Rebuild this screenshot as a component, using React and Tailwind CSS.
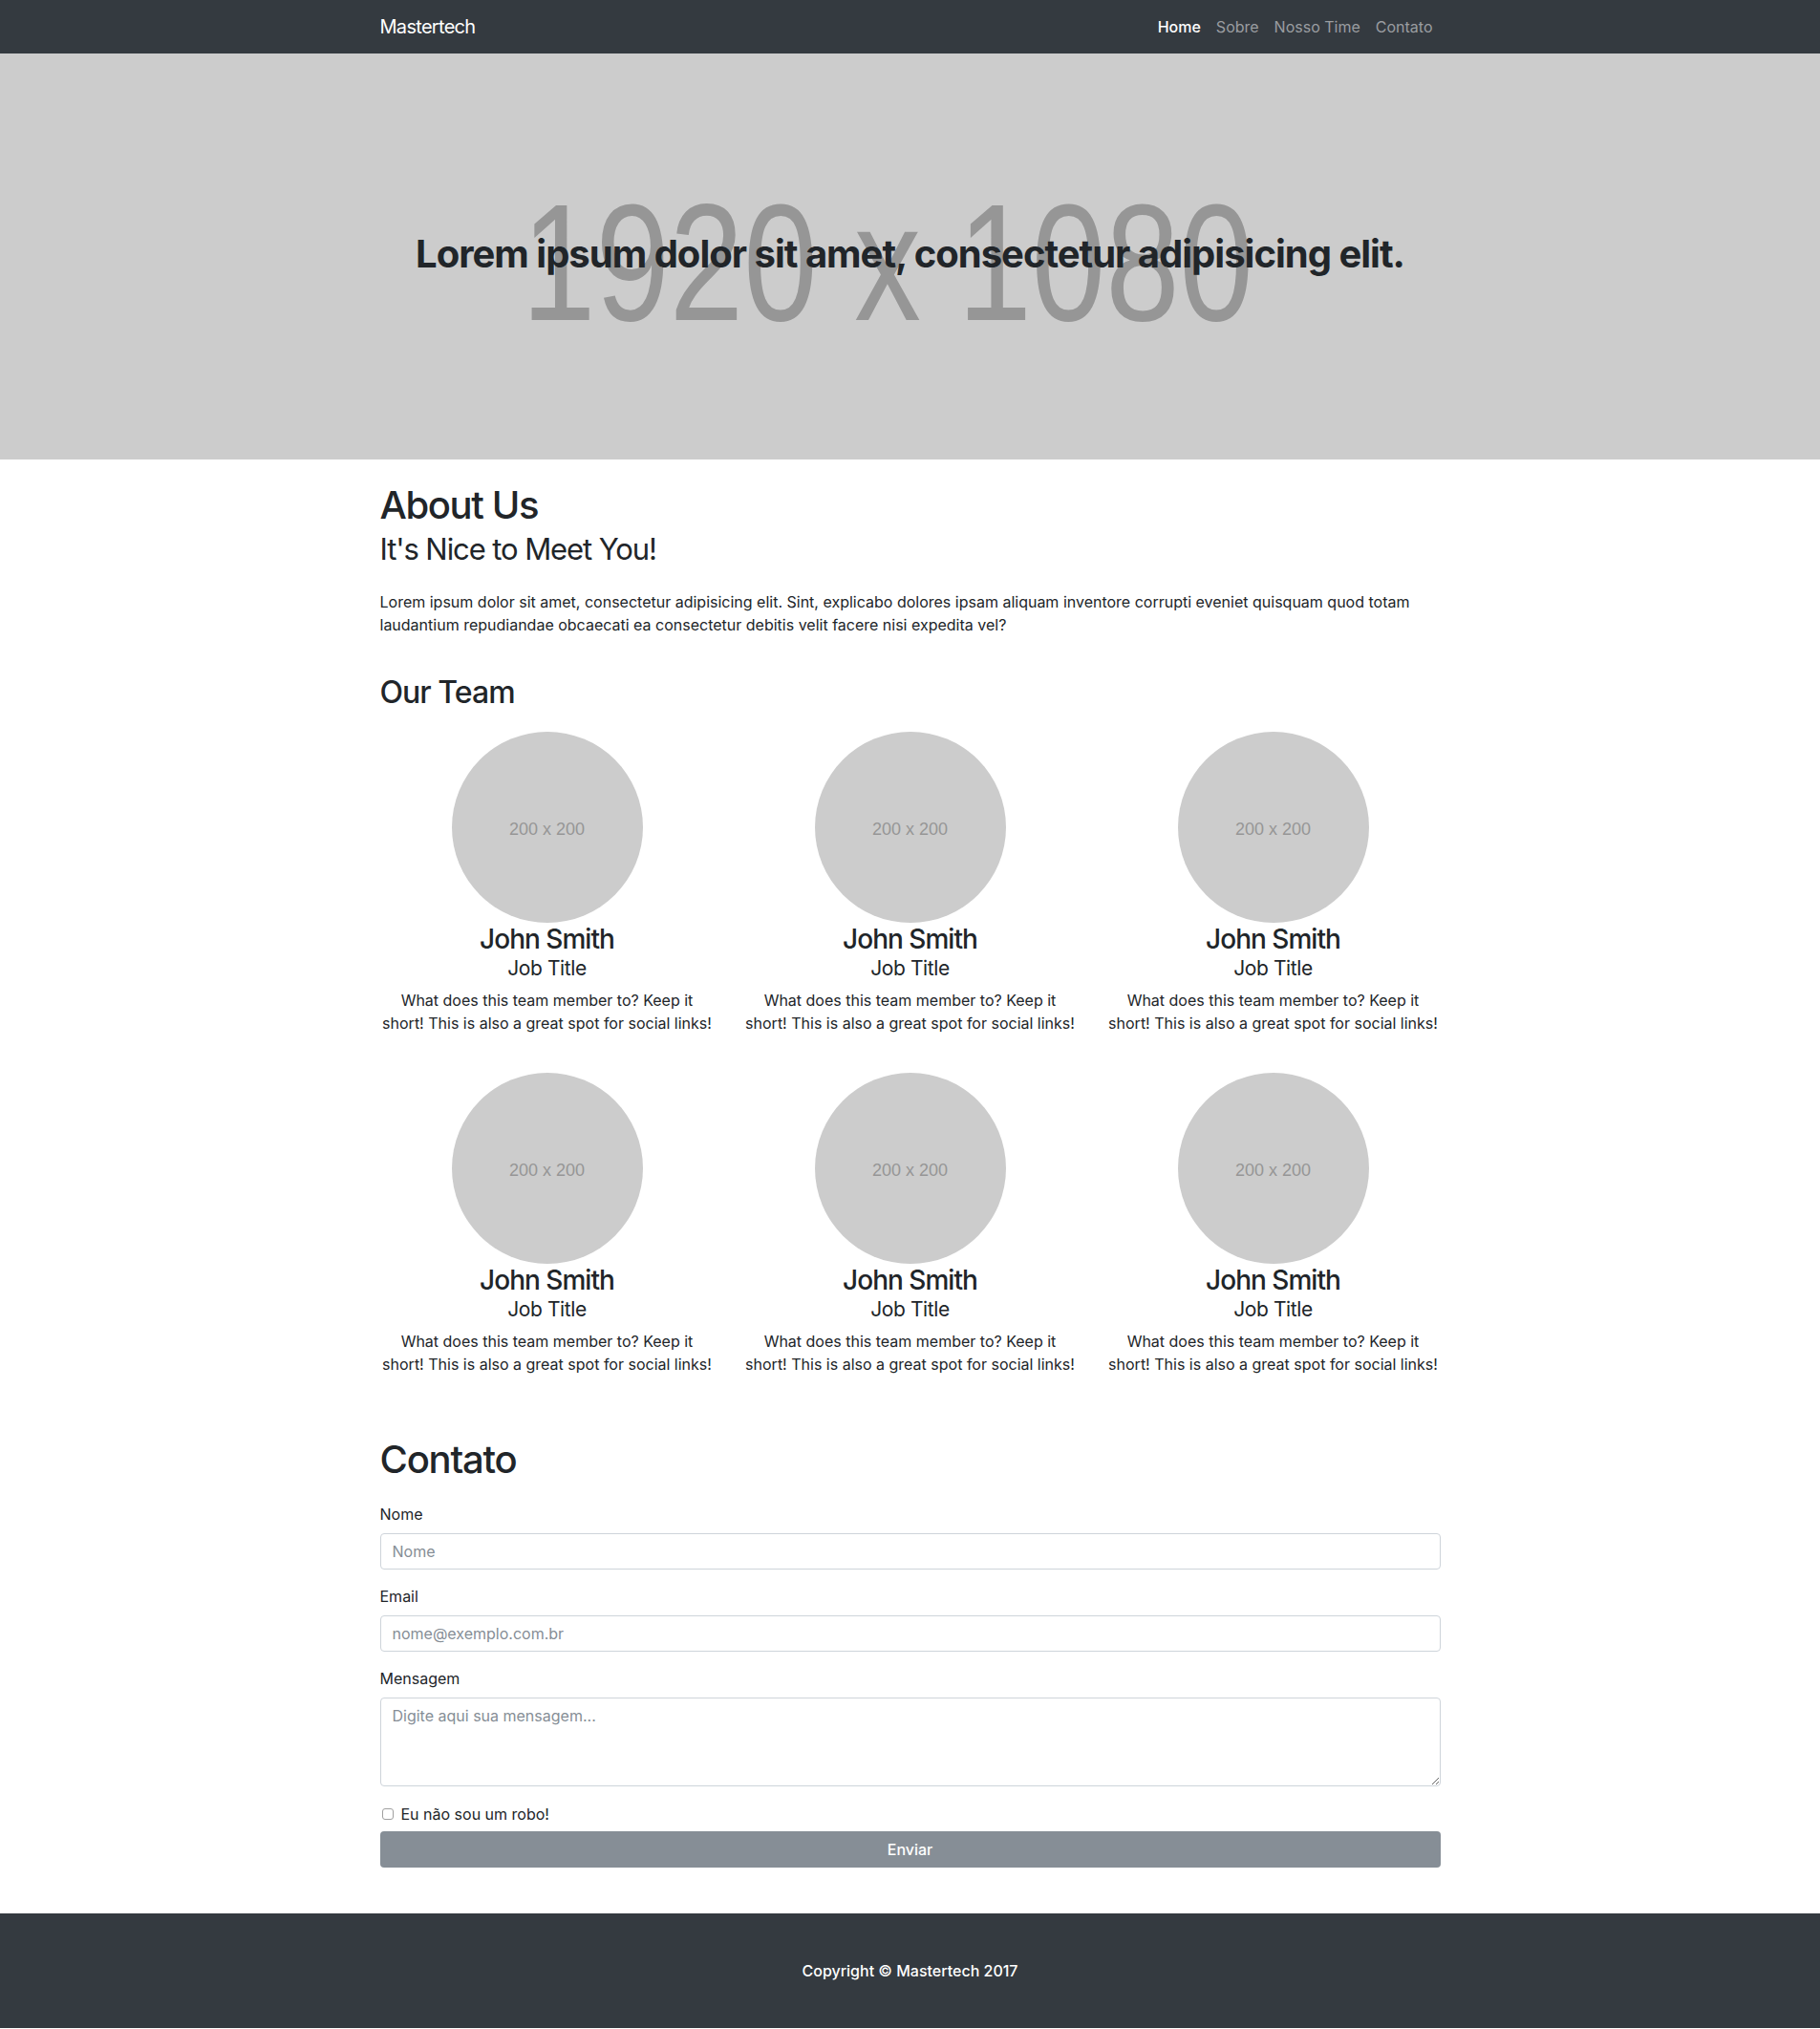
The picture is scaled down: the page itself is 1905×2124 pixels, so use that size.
import React from "react";

const members = [0, 1, 2, 3, 4, 5];

function Member() {
  return (
    <div className="flex flex-col items-center text-center">
      <div className="flex h-[200px] w-[200px] items-center justify-center rounded-full bg-[#cccccc]">
        <span className="mt-[5px] font-['Liberation_Sans',Arial,sans-serif] text-[18px] text-[#969696]">200 x 200</span>
      </div>
      <h3 className="text-[28px] leading-[34px] font-medium tracking-[-0.035em]">John Smith</h3>
      <h4 className="text-[21px] leading-[27px] font-normal tracking-[-0.02em]">Job Title</h4>
      <p className="mt-[8px] whitespace-nowrap text-[16px] leading-[24px]">
        What does this team member to? Keep it
        <br />
        short! This is also a great spot for social links!
      </p>
    </div>
  );
}

export default function App() {
  return (
    <div className="min-h-[2124px] bg-white font-['Inter','Noto_Sans',sans-serif] text-[#212529]">
      <nav className="h-14 bg-[#343a40]">
        <div className="mx-auto flex h-full w-[1110px] items-center justify-between">
          <a className="text-[20px] leading-[30px] font-normal text-white tracking-[-0.035em]">Mastertech</a>
          <ul className="flex items-center text-[16px] leading-[24px]">
            <li><a className="block px-2 font-medium text-white">Home</a></li>
            <li><a className="block px-2 text-[#9a9da0]">Sobre</a></li>
            <li><a className="block px-2 text-[#9a9da0]">Nosso Time</a></li>
            <li><a className="block px-2 text-[#9a9da0]">Contato</a></li>
          </ul>
        </div>
      </nav>

      <header className="relative flex h-[425px] items-center justify-center overflow-hidden bg-[#cccccc]">
        <svg className="absolute inset-0 h-full w-full" viewBox="0 0 1905 425" preserveAspectRatio="none" aria-hidden="true">
          <text
            x="546"
            y="279"
            textLength="766"
            lengthAdjust="spacingAndGlyphs"
            fill="#969696"
            fontSize="174"
            fontFamily="Liberation Sans, Arial, sans-serif"
          >
            1920 x 1080
          </text>
        </svg>
        <h1 className="relative mb-[6px] text-[40px] leading-[48px] font-bold tracking-[-0.025em] text-[#212529]">
          Lorem ipsum dolor sit amet, consectetur adipisicing elit.
        </h1>
      </header>

      <main className="mx-auto w-[1110px]">
        <section className="pt-6">
          <h1 className="text-[40px] leading-[48px] font-medium tracking-[-0.035em]">About Us</h1>
          <h2 className="mt-[3px] text-[31px] leading-[38px] font-normal tracking-[-0.035em]">It's Nice to Meet You!</h2>
          <p className="mt-6 text-[16px] leading-[24px]">
            Lorem ipsum dolor sit amet, consectetur adipisicing elit. Sint, explicabo dolores ipsam aliquam inventore corrupti eveniet quisquam quod totam laudantium repudiandae obcaecati ea consectetur debitis velit facere nisi expedita vel?
          </p>
        </section>

        <section className="mt-10">
          <h2 className="text-[32px] leading-[38px] font-medium tracking-[-0.03em]">Our Team</h2>
          <div className="mt-[22px] grid grid-cols-3 gap-x-[30px] gap-y-10">
            {members.map((m) => (
              <Member key={m} />
            ))}
          </div>
        </section>

        <section className="mt-16">
          <h1 className="text-[40px] leading-[48px] font-medium tracking-[-0.03em]">Contato</h1>
          <form className="mt-[21px]">
            <div className="mb-4">
              <label className="mb-2 block text-[16px] leading-[24px]">Nome</label>
              <input
                type="text"
                placeholder="Nome"
                className="block h-[38px] w-full rounded-[4px] border border-[#ced4da] px-3 text-[16px] text-[#495057] placeholder:text-[#868e96] outline-none"
              />
            </div>
            <div className="mb-4">
              <label className="mb-2 block text-[16px] leading-[24px]">Email</label>
              <input
                type="email"
                placeholder="nome@exemplo.com.br"
                className="block h-[38px] w-full rounded-[4px] border border-[#ced4da] px-3 text-[16px] text-[#495057] placeholder:text-[#868e96] outline-none"
              />
            </div>
            <div className="mb-[17px]">
              <label className="mb-2 block text-[16px] leading-[24px]">Mensagem</label>
              <textarea
                placeholder="Digite aqui sua mensagem..."
                className="block h-[93px] w-full rounded-[4px] border border-[#ced4da] px-3 py-[6px] text-[16px] leading-[24px] text-[#495057] placeholder:text-[#868e96] outline-none"
              />
            </div>
            <label className="flex h-6 items-center text-[16px] leading-[24px]">
              <input
                type="checkbox"
                className="ml-[2px] mr-2 h-3 w-3 appearance-none rounded-[3px] border border-[#a0a0a0] bg-white"
              />
              Eu não sou um robo!
            </label>
            <button
              type="button"
              className="mt-[6px] block h-[38px] w-full rounded-[4px] bg-[#868e96] text-[16px] font-medium text-white"
            >
              Enviar
            </button>
          </form>
        </section>
      </main>

      <footer className="mt-12 flex h-[120px] items-center justify-center bg-[#343a40]">
        <p className="text-[16px] leading-[24px] font-medium text-white">Copyright © Mastertech 2017</p>
      </footer>
    </div>
  );
}
